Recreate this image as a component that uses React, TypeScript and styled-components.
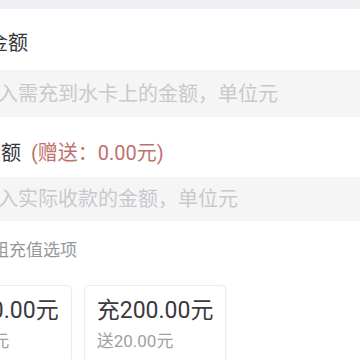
import React from "react";
import styled, { createGlobalStyle } from "styled-components";

const Global = createGlobalStyle`
  html, body { margin: 0; padding: 0; background: #ffffff; overflow: hidden; }
  body { font-family: Roboto, "Noto Sans CJK SC", sans-serif; }
  * { box-sizing: border-box; }
`;

const TopBand = styled.div`
  height: 9px;
  background: #eef0f3;
`;

const Page = styled.div`
  margin-left: -71px;
  width: 480px;
  display: flex;
  flex-direction: column;
`;

const LabelRow = styled.div<{ $mt: number }>`
  margin-top: ${(p) => p.$mt}px;
  padding-left: 12px;
  display: flex;
  align-items: center;
  height: 28px;
  font-size: 20px;
  color: #353537;
  white-space: nowrap;
`;

const Star = styled.span`
  color: #ee0a24;
  width: 7px;
  display: inline-block;
`;

const Gift = styled.span`
  margin-left: 10px;
  color: #c0716d;
`;

const Field = styled.input<{ $h: number; $mt: number }>`
  margin-top: ${(p) => p.$mt}px;
  height: ${(p) => p.$h}px;
  width: 100%;
  border: none;
  outline: none;
  background: #f5f5f6;
  padding: 0 0 0 29px;
  font-family: Roboto, "Noto Sans CJK SC", sans-serif;
  font-size: 20px;
  color: #323233;
  &::placeholder { color: #c8c9cc; }
`;

const SectionTitle = styled.div`
  margin-top: 17px;
  padding-left: 12px;
  height: 24px;
  line-height: 24px;
  font-size: 17px;
  color: #969799;
  white-space: nowrap;
`;

const Cards = styled.div`
  margin-top: 23px;
  display: flex;
  gap: 12px;
`;

const Card = styled.div`
  border: 1px solid #ededed;
  border-radius: 4px;
  padding: 10px 12px;
  background: #fff;
  box-shadow: 0 1px 3px rgba(0, 0, 0, 0.03);
  display: flex;
  flex-direction: column;
  gap: 4px;
`;

const Amount = styled.div`
  font-size: 23px;
  line-height: 30px;
  color: #3a3a3c;
  white-space: nowrap;
`;

const Bonus = styled.div`
  font-size: 17px;
  line-height: 22px;
  color: #a0a1a3;
  white-space: nowrap;
`;

const options = [
  { amount: "充100.00元", bonus: "送5.00元" },
  { amount: "充200.00元", bonus: "送20.00元" },
];

export default function App() {
  return (
    <>
      <Global />
      <TopBand />
      <Page>
        <LabelRow $mt={18}>
          <Star>*</Star>充值金额
        </LabelRow>
        <Field $mt={15} $h={47} placeholder="请输入需充到水卡上的金额，单位元" />
        <LabelRow $mt={20}>
          实收金额<Gift>(赠送：0.00元)</Gift>
        </LabelRow>
        <Field $mt={12} $h={44} placeholder="请输入实际收款的金额，单位元" />
        <SectionTitle>水卡分组充值选项</SectionTitle>
        <Cards>
          {options.map((o) => (
            <Card key={o.amount}>
              <Amount>{o.amount}</Amount>
              <Bonus>{o.bonus}</Bonus>
            </Card>
          ))}
        </Cards>
      </Page>
    </>
  );
}
